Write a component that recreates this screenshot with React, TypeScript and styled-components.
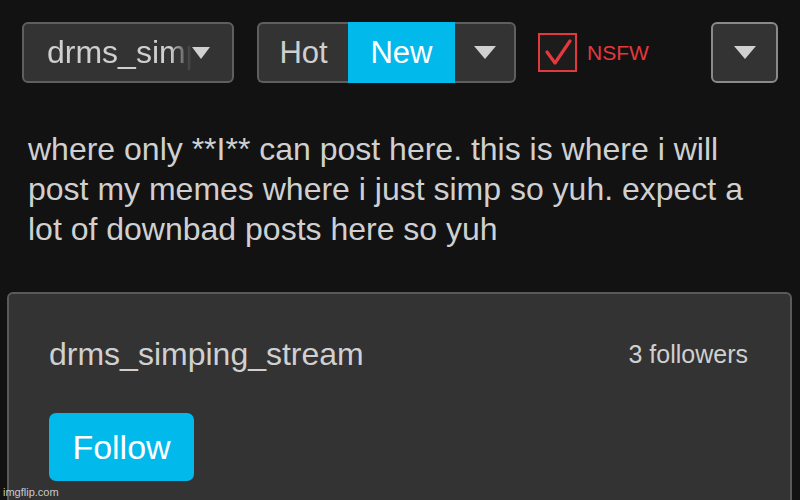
import React from "react";
import styled, { createGlobalStyle } from "styled-components";

const GlobalStyle = createGlobalStyle`
  html, body {
    margin: 0;
    padding: 0;
    background: #121212;
    overflow: hidden;
  }
  body {
    font-family: "Liberation Sans", Arial, Helvetica, sans-serif;
    color: #cfcfcf;
  }
`;

const Page = styled.div`
  position: relative;
  width: 800px;
  height: 500px;
  overflow: hidden;
  background: #121212;
`;

const Toolbar = styled.div`
  display: flex;
  align-items: center;
  padding: 22px 22px 0 22px;
  height: 61px;
`;

const Select = styled.div`
  box-sizing: border-box;
  width: 212px;
  height: 61px;
  display: flex;
  align-items: center;
  padding: 0 22px 0 23px;
  background: #333333;
  border: 2px solid #5f5f5f;
  border-radius: 6px;
  font-size: 32px;
  color: #cfcfcf;
`;

const SelectText = styled.span`
  flex: 1;
  overflow: hidden;
  white-space: nowrap;
  -webkit-mask-image: linear-gradient(to right, #000 85%, rgba(0, 0, 0, 0.3) 95%, transparent 100%);
  mask-image: linear-gradient(to right, #000 85%, rgba(0, 0, 0, 0.3) 95%, transparent 100%);
`;

const Triangle = styled.span<{ $w: number; $h: number }>`
  display: block;
  width: 0;
  height: 0;
  border-left: ${(p) => p.$w / 2}px solid transparent;
  border-right: ${(p) => p.$w / 2}px solid transparent;
  border-top: ${(p) => p.$h}px solid #d0d0d0;
  flex: none;
`;

const SortGroup = styled.div`
  display: flex;
  height: 61px;
  margin-left: 23px;
`;

const Segment = styled.div<{ $w: number; $active?: boolean; $pos?: "left" | "right" | "mid" }>`
  box-sizing: border-box;
  width: ${(p) => p.$w}px;
  height: 61px;
  display: flex;
  align-items: center;
  justify-content: center;
  font-size: 31px;
  background: ${(p) => (p.$active ? "#02b9ec" : "#333333")};
  color: ${(p) => (p.$active ? "#ffffff" : "#cfcfcf")};
  border-top: ${(p) => (p.$active ? "none" : "2px solid #5f5f5f")};
  border-bottom: ${(p) => (p.$active ? "none" : "2px solid #5f5f5f")};
  border-left: ${(p) => (p.$pos === "left" ? "2px solid #5f5f5f" : "none")};
  border-right: ${(p) => (p.$pos === "right" ? "2px solid #5f5f5f" : "none")};
  border-radius: ${(p) =>
    p.$pos === "left" ? "6px 0 0 6px" : p.$pos === "right" ? "0 6px 6px 0" : "0"};
`;

const NsfwLabel = styled.label`
  display: flex;
  align-items: center;
  gap: 10px;
  margin-left: 22px;
  font-size: 21px;
  color: #e4393c;
`;

const CheckBox = styled.span`
  box-sizing: border-box;
  width: 39px;
  height: 39px;
  border: 2px solid #e4393c;
  background: #1c1c1c;
  display: flex;
`;

const IconButton = styled.div`
  box-sizing: border-box;
  width: 67px;
  height: 61px;
  margin-left: auto;
  display: flex;
  align-items: center;
  justify-content: center;
  background: #333333;
  border: 2px solid #8a8a8a;
  border-radius: 6px;
`;

const Description = styled.p`
  margin: 46px 28px 0 28px;
  font-size: 32px;
  line-height: 40px;
  color: #d0d0d0;
`;

const Card = styled.section`
  box-sizing: border-box;
  margin: 43px 8px 0 7px;
  height: 260px;
  padding: 40px 42px 0 40px;
  background: #333333;
  border: 2px solid #5a5a5a;
  border-radius: 6px;
`;

const CardHeader = styled.div`
  display: flex;
  align-items: center;
  justify-content: space-between;
  height: 40px;
`;

const CardTitle = styled.div`
  font-size: 32px;
  line-height: 40px;
  color: #d0d0d0;
`;

const Followers = styled.div`
  font-size: 25px;
  line-height: 40px;
  color: #d0d0d0;
`;

const FollowButton = styled.button`
  margin-top: 39px;
  width: 145px;
  height: 68px;
  border: none;
  border-radius: 7px;
  background: #02b9ec;
  color: #ffffff;
  font-family: "Liberation Sans", Arial, sans-serif;
  font-size: 34px;
  padding: 0;
  display: flex;
  align-items: center;
  justify-content: center;
`;

const Watermark = styled.div`
  position: absolute;
  left: 3px;
  bottom: 2px;
  font-size: 11px;
  line-height: 12px;
  color: rgba(230, 230, 230, 0.85);
`;

export default function App() {
  return (
    <>
      <GlobalStyle />
      <Page>
        <Toolbar>
          <Select>
            <SelectText>drms_simping_stream</SelectText>
            <Triangle $w={18} $h={12} />
          </Select>
          <SortGroup>
            <Segment $w={91} $pos="left">Hot</Segment>
            <Segment $w={107} $active $pos="mid">New</Segment>
            <Segment $w={61} $pos="right">
              <Triangle $w={22} $h={13} />
            </Segment>
          </SortGroup>
          <NsfwLabel>
            <CheckBox>
              <svg width="35" height="35" viewBox="0 0 35 35">
                <polyline
                  points="7,17 15,28 30,6"
                  fill="none"
                  stroke="#e4393c"
                  strokeWidth="3.2"
                  strokeLinecap="round"
                  strokeLinejoin="round"
                />
              </svg>
            </CheckBox>
            NSFW
          </NsfwLabel>
          <IconButton>
            <Triangle $w={22} $h={13} />
          </IconButton>
        </Toolbar>
        <Description>
          where only **I** can post here. this is where i will post my memes where i just simp so
          yuh. expect a lot of downbad posts here so yuh
        </Description>
        <Card>
          <CardHeader>
            <CardTitle>drms_simping_stream</CardTitle>
            <Followers>3 followers</Followers>
          </CardHeader>
          <FollowButton>Follow</FollowButton>
        </Card>
        <Watermark>imgflip.com</Watermark>
      </Page>
    </>
  );
}
